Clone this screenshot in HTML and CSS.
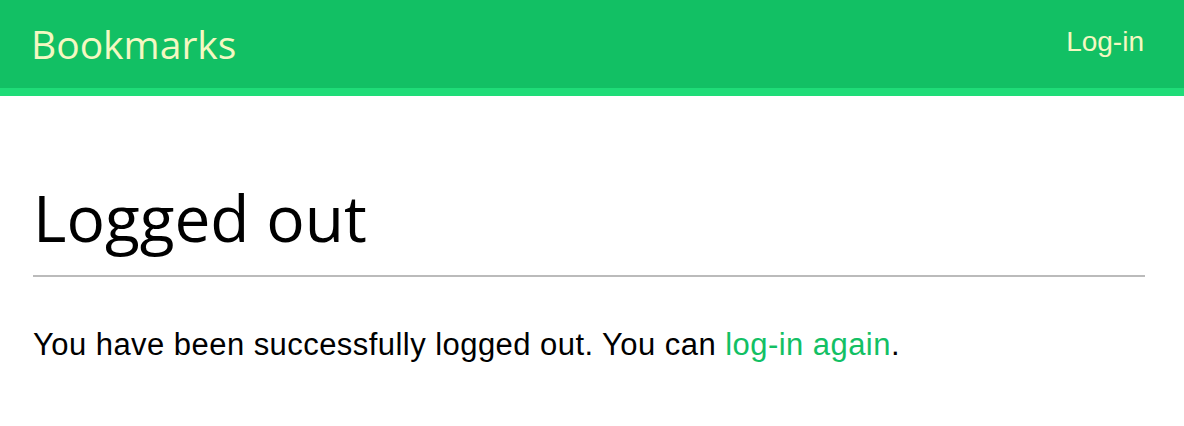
FILE: index.html
```html
<!DOCTYPE html>
<html>
<head>
<meta charset="utf-8">
<link rel="stylesheet" href="styles.css">
</head>
<body>
<header class="header">
  <span class="logo">Bookmarks</span>
  <a class="login" href="#">Log-in</a>
</header>
<main class="content">
  <h1 class="title">Logged out</h1>
  <p class="text">You have been successfully logged out. You can <a class="link" href="#">log-in again</a>.</p>
</main>
</body>
</html>
```
FILE: styles.css
```css
html, body { margin: 0; padding: 0; background: #fff; }
body { font-family: "Liberation Sans", Arial, sans-serif; }
.header {
  display: flex;
  align-items: center;
  justify-content: space-between;
  height: 88px;
  padding: 0 40px 0 31px;
  background: #12c064;
  border-bottom: 8px solid #1fdc78;
}
.logo {
  font-family: "Open Sans", sans-serif;
  font-size: 39px;
  color: #f4f8c2;
  margin-top: -2px;
}
.login {
  font-family: "Liberation Sans", Arial, sans-serif;
  font-size: 28px;
  color: #f4f8c2;
  text-decoration: none;
  margin-top: -4px;
}
.content { padding: 0 39px 0 33px; }
.title {
  margin: 0;
  padding-top: 82px;
  padding-bottom: 17px;
  font-family: "Open Sans", sans-serif;
  font-weight: 400;
  font-size: 64px;
  line-height: 80px;
  border-bottom: 2px solid #bbbbbb;
}
.text {
  margin: 50px 0 0;
  font-size: 31px;
  letter-spacing: 0.45px;
  color: #000;
}
.link { color: #12c064; text-decoration: none; }
```
